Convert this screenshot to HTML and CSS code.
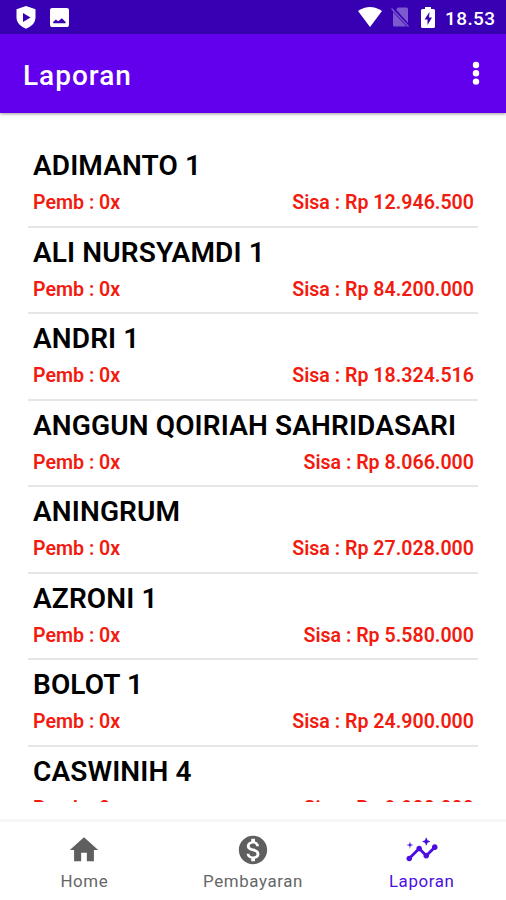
FILE: index.html
```html
<!DOCTYPE html>
<html lang="id">

<head>
  <meta charset="UTF-8">
  <meta name="viewport" content="width=device-width, initial-scale=1.0">
  <title>Laporan</title>
  <link rel="stylesheet" href="styles.css">
</head>

<body>
  <div class="statusbar">
    <svg class="shield" viewBox="0 0 20 23"><path fill="#fff" d="M10 0l9.5 3.3v8.2c0 5-4 9-9.5 11.200C4.500 20.500.500 16.500.500 11.500V3.300z"/><path fill="#3700b3" d="M7 7v9l7.500-4.500z"/></svg>
    <svg class="image" viewBox="3 3 18 18"><path fill="#fff" d="M19 3H5c-1.100 0-2 .9-2 2v14c0 1.100.9 2 2 2h14c1.100 0 2-.9 2-2V5c0-1.100-.9-2-2-2z"/><path fill="#3700b3" d="M6 17.500v-1.200l2.500-2.500 2.300 1.800 3.400-2.800 3.600 3.500v1.200z"/></svg>
    <div class="right">
      <svg class="wifi" viewBox="0 0 24 20"><path fill="#fff" d="M0 4Q12-4 24 4L12 20z"/></svg>
      <svg class="sim" viewBox="0 0 18 20"><path fill="#7c59cf" d="M5 2.500L7 .5h8.500q1.500 0 1.500 1.500v14zM2 5l13.500 14.500H3.500Q2 19.500 2 18z"/><path stroke="#7c59cf" stroke-width="1.500" d="M.5 1.500l17 18"/></svg>
      <svg class="battery" viewBox="0 0 14 21"><path fill="#fff" d="M4 2V0h6v2h2.500q1.500 0 1.500 1.500v16q0 1.500-1.500 1.500h-11Q0 21 0 19.500v-16Q0 2 1.500 2z"/><path fill="#3700b3" d="M8.500 5L3.500 12.500h3V18l4.500-7.500H8z"/></svg>
      <span class="clock">18.53</span>
    </div>
  </div>

  <div class="appbar">
    <h1>Laporan</h1>
    <svg class="more" viewBox="0 0 8 24"><circle cx="4" cy="4" r="3.200"/><circle cx="4" cy="12.300" r="3.200"/><circle cx="4" cy="20.600" r="3.200"/></svg>
  </div>

  <div class="list">
    <div class="item">
      <div class="name">ADIMANTO 1</div>
      <div class="info"><span>Pemb : 0x</span><span>Sisa : Rp 12.946.500</span></div>
    </div>
    <div class="item">
      <div class="name">ALI NURSYAMDI 1</div>
      <div class="info"><span>Pemb : 0x</span><span>Sisa : Rp 84.200.000</span></div>
    </div>
    <div class="item">
      <div class="name">ANDRI 1</div>
      <div class="info"><span>Pemb : 0x</span><span>Sisa : Rp 18.324.516</span></div>
    </div>
    <div class="item">
      <div class="name">ANGGUN QOIRIAH SAHRIDASARI</div>
      <div class="info"><span>Pemb : 0x</span><span>Sisa : Rp 8.066.000</span></div>
    </div>
    <div class="item">
      <div class="name">ANINGRUM</div>
      <div class="info"><span>Pemb : 0x</span><span>Sisa : Rp 27.028.000</span></div>
    </div>
    <div class="item">
      <div class="name">AZRONI 1</div>
      <div class="info"><span>Pemb : 0x</span><span>Sisa : Rp 5.580.000</span></div>
    </div>
    <div class="item">
      <div class="name">BOLOT 1</div>
      <div class="info"><span>Pemb : 0x</span><span>Sisa : Rp 24.900.000</span></div>
    </div>
    <div class="item">
      <div class="name">CASWINIH 4</div>
      <div class="info"><span>Pemb : 0x</span><span>Sisa : Rp 9.900.000</span></div>
    </div>
  </div>

  <div class="nav">
    <div class="tab">
      <svg viewBox="0 0 24 24"><path d="M10 20v-6h4v6h5v-8h3L12 3 2 12h3v8z"/></svg>
      <span>Home</span>
    </div>
    <div class="tab">
      <svg viewBox="0 0 24 24"><path d="M12 2C6.480 2 2 6.480 2 12s4.480 10 10 10 10-4.480 10-10S17.520 2 12 2zm1.410 16.090V20h-2.670v-1.930c-1.710-.36-3.160-1.460-3.270-3.400h1.960c.1 1.050.82 1.870 2.650 1.870 1.960 0 2.400-.98 2.400-1.590 0-.83-.44-1.610-2.670-2.140-2.480-.6-4.180-1.620-4.180-3.670 0-1.720 1.390-2.840 3.110-3.210V4h2.670v1.950c1.860.45 2.790 1.860 2.850 3.390H14.300c-.05-1.110-.64-1.870-2.220-1.870-1.500 0-2.400.68-2.400 1.640 0 .84.65 1.390 2.670 1.910s4.180 1.390 4.180 3.910c-.01 1.830-1.380 2.830-3.120 3.160z"/></svg>
      <span>Pembayaran</span>
    </div>
    <div class="tab active">
      <svg viewBox="0 0 24 24"><path d="M21 8c-1.450 0-2.260 1.440-1.930 2.510l-3.550 3.560c-.3-.09-.74-.09-1.040 0l-2.550-2.550C12.270 10.450 11.460 9 10 9c-1.450 0-2.270 1.440-1.930 2.520l-4.560 4.550C2.440 15.740 1 16.550 1 18c0 1.100.9 2 2 2 1.450 0 2.260-1.440 1.930-2.510l4.550-4.560c.3.09.74.09 1.040 0l2.550 2.550C12.730 16.550 13.540 18 15 18c1.450 0 2.270-1.440 1.930-2.520l3.560-3.550C21.560 12.260 23 11.450 23 10c0-1.100-.9-2-2-2z"/><path d="M15 9l.94-2.070L18 6l-2.060-.93L15 3l-.92 2.070L12 6l2.080.93zM3.500 11L4 9l2-.5L4 8l-.5-2L3 8l-2 .5L3 9z"/></svg>
      <span>Laporan</span>
    </div>
  </div>
</body>

</html>
```
FILE: styles.css
```css
body,html{
  height:100%;
}
* {
  box-sizing: border-box;
}
body {
  margin: 0;
  font-family: Roboto, sans-serif;
  background-color: #fff;
  display: flex;
  flex-direction: column;
  overflow: hidden;
}

svg {
  display: block;
}

.statusbar {
  height: 34px;
  flex: none;
  display: flex;
  align-items: center;
  padding: 0 10px 0 16px;
  background-color: #3700b3;
  color: #fff;
}

.shield {
  width: 20px;
  height: 23px;
}

.image {
  width: 19px;
  height: 19px;
  margin-left: 14px;
}

.right {
  display: flex;
  align-items: center;
  margin-left: auto;
}

.wifi {
  width: 24px;
  height: 20px;
}

.sim {
  width: 18px;
  height: 20px;
  margin-left: 9px;
}

.battery {
  width: 14px;
  height: 21px;
  margin: 0 10px 0 12px;
}

.clock {
  width: 51px;
  font-size: 19px;
  font-weight: 500;
  letter-spacing: 0.4px;
  line-height: 34px;
  padding-top: 3px;
}

.appbar {
  height: 79px;
  flex: none;
  display: flex;
  justify-content: space-between;
  align-items: center;
  padding: 0 26px 0 23px;
  background-color: #6200ee;
  box-shadow: 0 1px 3px rgba(0, 0, 0, 0.4);
}

h1 {
  margin: 3px 0 0;
  color: #fff;
  font-size: 28px;
  font-weight: 500;
  letter-spacing: 1px;
}

.more {
  width: 8px;
  height: 24px;
  margin-bottom: 2px;
  fill: #fff;
}

.list {
  height: 661px;
  flex: none;
  margin: 28px 28px 0;
  overflow: hidden;
}

.item {
  height: 86.5px;
  padding: 8px 4px 0 5px;
  border-bottom: 2px solid #e6e6e6;
}

.name {
  font-size: 28px;
  font-weight: 600;
  letter-spacing: 0.13px;
  line-height: 34px;
  color: #000;
  white-space: nowrap;
}

.info {
  display: flex;
  justify-content: space-between;
  margin-top: 7px;
  font-size: 19.6px;
  font-weight: 600;
  line-height: 25px;
  color: #f21b0f;
}

.nav {
  flex: 1;
  display: flex;
  justify-content: center;
  margin-top: 17px;
  border-top: 3px solid #f7f7f7;
}

.tab {
  width: 169px;
  display: flex;
  flex-direction: column;
  align-items: center;
  padding-top: 11px;
  color: #666;
  font-size: 16.9px;
  letter-spacing: 0.6px;
}

.tab svg {
  width: 34px;
  height: 34px;
  fill: #5f5f5f;
}

.tab span {
  line-height: 20px;
  margin-top: 4px;
}

.active {
  color: #4a0fe0;
}

.active svg {
  fill: #4a0fe0;
}
```
